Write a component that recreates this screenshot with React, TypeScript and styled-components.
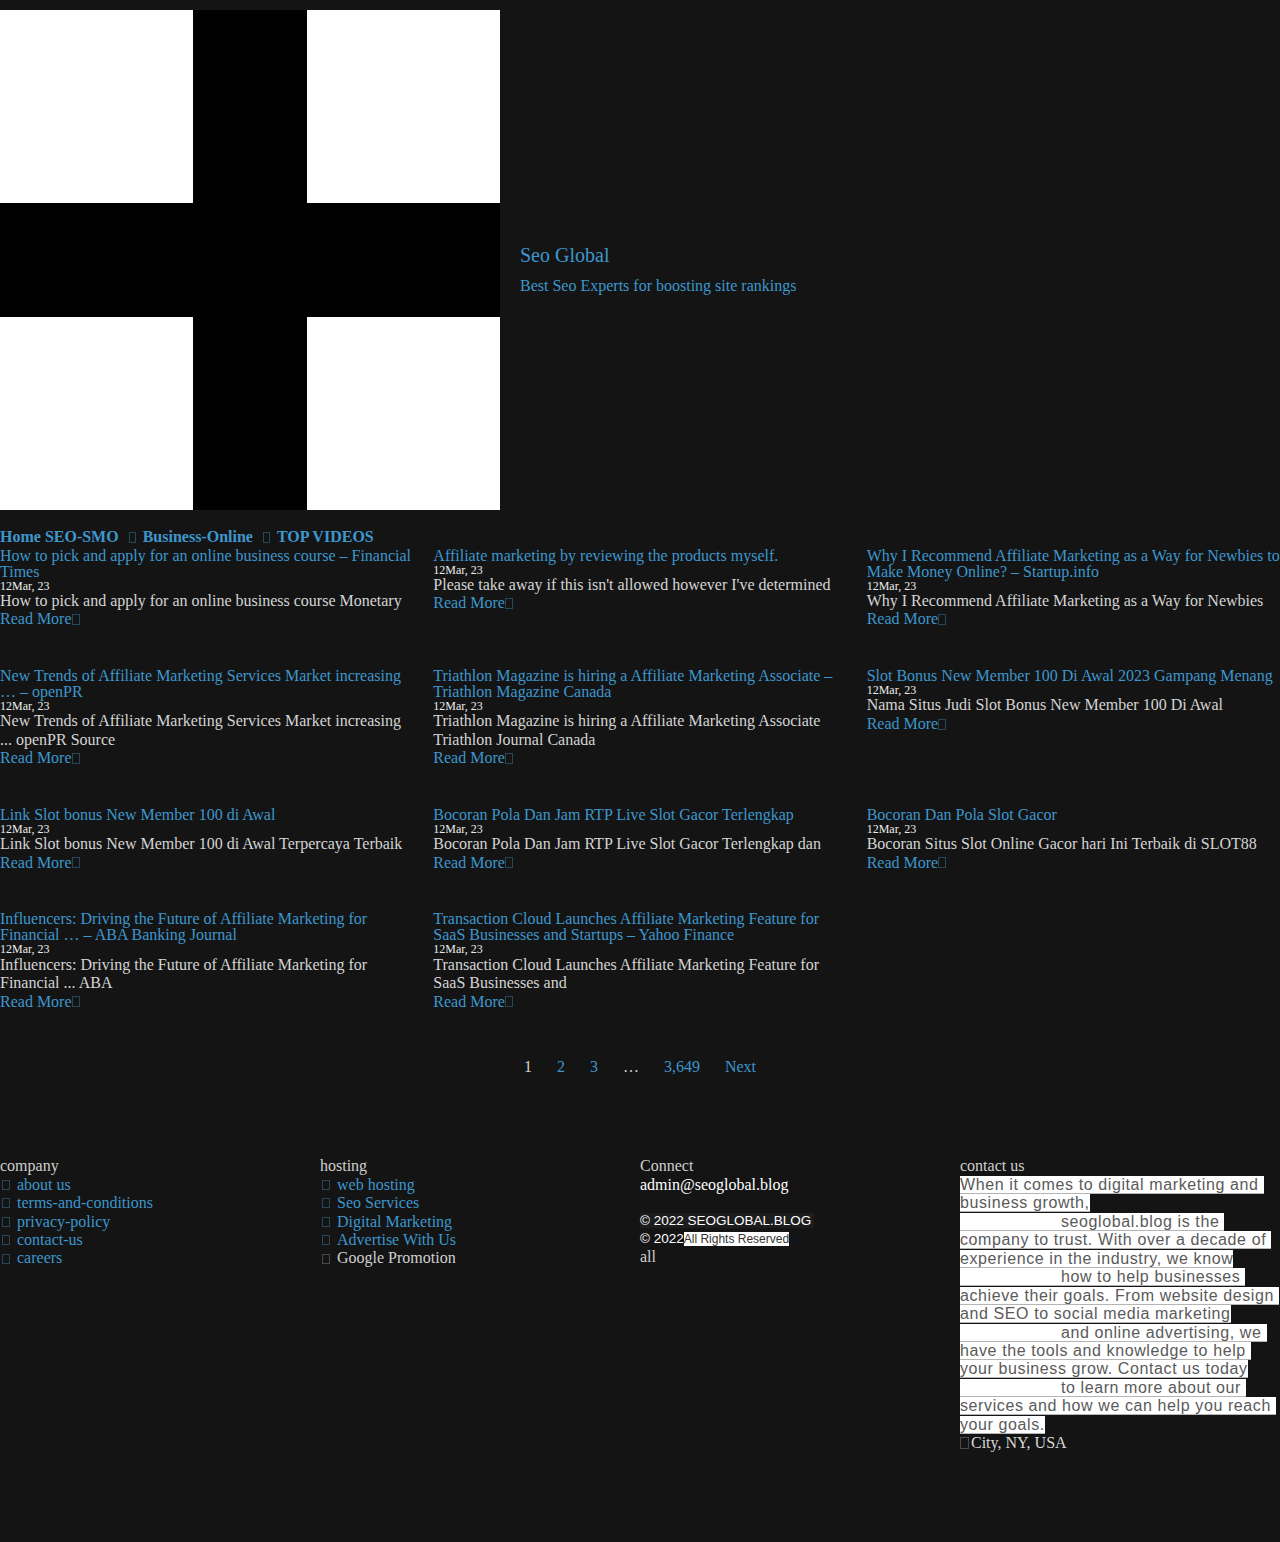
import React from 'react';
import styled, { createGlobalStyle } from 'styled-components';

const BLUE = '#3d97cd';
const DIM_BLUE = '#27465a';

const Global = createGlobalStyle`
  html, body { margin: 0; padding: 0; background: #141414; }
  body {
    font-family: "Liberation Serif", "Times New Roman", serif;
    font-size: 16px;
    line-height: 18.4px;
    color: #d2d2d2;
  }
  a { text-decoration: none; color: inherit; }
`;

const Page = styled.div`
  min-height: 1542px;
  padding-top: 10px;
  box-sizing: border-box;
`;

const Header = styled.header`
  display: flex;
  align-items: center;
`;

const Brand = styled.div`
  margin-left: 20px;
  color: ${BLUE};
`;

const SiteTitle = styled.h1`
  font-size: 20px;
  font-weight: normal;
  margin: 19px 0 10px;
  line-height: 23px;
`;

const Tagline = styled.p`
  margin: 0;
  font-size: 16px;
`;

const Tofu = styled.span<{ $w?: number; $h?: number; $c?: string }>`
  display: inline-block;
  box-sizing: border-box;
  width: ${(p) => p.$w ?? 7}px;
  height: ${(p) => p.$h ?? 11}px;
  border: 1px solid ${(p) => p.$c ?? DIM_BLUE};
  flex: none;
`;

const Nav = styled.nav`
  margin-top: 18px;
  display: flex;
  align-items: center;
  font-weight: bold;
  color: ${BLUE};
  line-height: 18px;
`;

const NavItem = styled.a`
  display: inline-flex;
  align-items: center;
  gap: 7px;
  margin-right: 10px;
`;

const Grid = styled.div`
  display: grid;
  grid-template-columns: repeat(3, 1fr);
  column-gap: 20px;
  row-gap: 37.7px;
  align-items: start;
`;

const Card = styled.article`
  display: flex;
  flex-direction: column;
`;

const CardTitle = styled.a`
  display: block;
  color: ${BLUE};
  line-height: 16px;
  padding-top: 1.5px;
`;

const CardDate = styled.span`
  font-size: 12px;
  line-height: 12px;
  padding-bottom: 0.5px;
  color: #ececec;
`;

const Excerpt = styled.p`
  margin: 0;
  color: #d4d4d4;
`;

const More = styled.a`
  display: flex;
  align-items: center;
  height: 18.4px;
  color: ${BLUE};
`;

const Pagination = styled.nav`
  margin-top: 47px;
  display: flex;
  justify-content: center;
  gap: 25px;
`;

const PageLink = styled.a<{ $current?: boolean }>`
  color: ${(p) => (p.$current ? '#d0d0d0' : BLUE)};
`;

const Footer = styled.footer`
  margin-top: 81px;
  display: grid;
  grid-template-columns: repeat(4, 320px);
`;

const FooterCol = styled.div`
  display: flex;
  flex-direction: column;
`;

const FooterHeading = styled.div`
  color: #cfcfcf;
`;

const FooterList = styled.ul`
  list-style: none;
  margin: 0;
  padding: 0;
`;

const FooterItem = styled.li<{ $plain?: boolean }>`
  display: flex;
  align-items: center;
  gap: 7px;
  padding-left: 2px;
  height: 18.4px;
  color: ${(p) => (p.$plain ? '#d0d0d0' : BLUE)};
`;

const Email = styled.div`
  color: #ffffff;
`;

const Spacer = styled.div`
  height: 18px;
`;

const Copyright = styled.div`
  font-family: "Liberation Sans", Arial, sans-serif;
  font-size: 13.5px;
  line-height: 18px;
  color: #ffffff;
`;

const CopyBox = styled.span`
  background: #1d1d1d;
  padding-right: 3px;
`;

const Rights = styled.span`
  background: #ffffff;
  color: #333333;
  font-size: 12px;
`;

const AllText = styled.div`
  color: #d0d0d0;
`;

const ContactPara = styled.p`
  margin: 0;
  font-family: "Liberation Sans", Arial, sans-serif;
  font-size: 16px;
  letter-spacing: 0.6px;
  white-space: pre-wrap;
  line-height: 18.46px;
`;

const Highlight = styled.span`
  background: #ffffff;
  color: #5a5a5a;
  border-bottom: 1px solid #b5b5b5;
`;

const City = styled.div`
  display: flex;
  align-items: center;
  gap: 2px;
  color: #d8d8d8;
`;

const Logo = () => (
  <svg width="500" height="500" viewBox="0 0 500 500" style={{ display: 'block', flex: 'none' }}>
    <rect width="500" height="500" fill="#ffffff" />
    <rect x="193" y="0" width="114" height="500" fill="#000000" />
    <rect x="0" y="193" width="500" height="114" fill="#000000" />
  </svg>
);

const posts = [
  {
    t: 'How to pick and apply for an online business course – Financial Times',
    e: 'How to pick and apply for an online business course Monetary',
  },
  {
    t: 'Affiliate marketing by reviewing the products myself.',
    e: "Please take away if this isn't allowed however I've determined",
  },
  {
    t: 'Why I Recommend Affiliate Marketing as a Way for Newbies to Make Money Online? – Startup.info',
    e: 'Why I Recommend Affiliate Marketing as a Way for Newbies',
  },
  {
    t: 'New Trends of Affiliate Marketing Services Market increasing … – openPR',
    e: 'New Trends of Affiliate Marketing Services Market increasing ... openPR Source',
  },
  {
    t: 'Triathlon Magazine is hiring a Affiliate Marketing Associate – Triathlon Magazine Canada',
    e: 'Triathlon Magazine is hiring a Affiliate Marketing Associate Triathlon Journal Canada',
  },
  {
    t: 'Slot Bonus New Member 100 Di Awal 2023 Gampang Menang',
    e: 'Nama Situs Judi Slot Bonus New Member 100 Di Awal',
  },
  {
    t: 'Link Slot bonus New Member 100 di Awal',
    e: 'Link Slot bonus New Member 100 di Awal Terpercaya Terbaik',
  },
  {
    t: 'Bocoran Pola Dan Jam RTP Live Slot Gacor Terlengkap',
    e: 'Bocoran Pola Dan Jam RTP Live Slot Gacor Terlengkap dan',
  },
  {
    t: 'Bocoran Dan Pola Slot Gacor',
    e: 'Bocoran Situs Slot Online Gacor hari Ini Terbaik di SLOT88',
  },
  {
    t: 'Influencers: Driving the Future of Affiliate Marketing for Financial … – ABA Banking Journal',
    e: 'Influencers: Driving the Future of Affiliate Marketing for Financial ... ABA',
  },
  {
    t: 'Transaction Cloud Launches Affiliate Marketing Feature for SaaS Businesses and Startups – Yahoo Finance',
    e: 'Transaction Cloud Launches Affiliate Marketing Feature for SaaS Businesses and',
  },
];

const IND = ' '.repeat(20);
const contactText =
  'When it comes to digital marketing and business growth,\n' +
  IND +
  'seoglobal.blog is the company to trust. With over a decade of experience in the industry, we know\n' +
  IND +
  'how to help businesses achieve their goals. From website design and SEO to social media marketing\n' +
  IND +
  'and online advertising, we have the tools and knowledge to help your business grow. Contact us today\n' +
  IND +
  'to learn more about our services and how we can help you reach your goals.';

export default function App() {
  return (
    <Page>
      <Global />
      <Header>
        <Logo />
        <Brand>
          <SiteTitle>Seo Global</SiteTitle>
          <Tagline>Best Seo Experts for boosting site rankings</Tagline>
        </Brand>
      </Header>

      <Nav>
        <NavItem href="#">Home SEO-SMO</NavItem>
        <NavItem href="#">
          <Tofu />
          Business-Online
        </NavItem>
        <NavItem href="#">
          <Tofu />
          TOP VIDEOS
        </NavItem>
      </Nav>

      <Grid>
        {posts.map((p) => (
          <Card key={p.t}>
            <CardTitle href="#">{p.t}</CardTitle>
            <CardDate>12Mar, 23</CardDate>
            <Excerpt>{p.e}</Excerpt>
            <More href="#">
              Read More
              <Tofu $w={8} $h={11} />
            </More>
          </Card>
        ))}
      </Grid>

      <Pagination>
        <PageLink $current>1</PageLink>
        <PageLink href="#">2</PageLink>
        <PageLink href="#">3</PageLink>
        <PageLink $current>…</PageLink>
        <PageLink href="#">3,649</PageLink>
        <PageLink href="#">Next</PageLink>
      </Pagination>

      <Footer>
        <FooterCol>
          <FooterHeading>company</FooterHeading>
          <FooterList>
            {['about us', 'terms-and-conditions', 'privacy-policy', 'contact-us', 'careers'].map((l) => (
              <FooterItem key={l}>
                <Tofu $w={8} $h={10} />
                {l}
              </FooterItem>
            ))}
          </FooterList>
        </FooterCol>
        <FooterCol>
          <FooterHeading>hosting</FooterHeading>
          <FooterList>
            {['web hosting', 'Seo Services', 'Digital Marketing', 'Advertise With Us'].map((l) => (
              <FooterItem key={l}>
                <Tofu $w={8} $h={10} />
                {l}
              </FooterItem>
            ))}
            <FooterItem $plain>
              <Tofu $w={8} $h={10} $c="#4a4a4a" />
              Google Promotion
            </FooterItem>
          </FooterList>
        </FooterCol>
        <FooterCol>
          <FooterHeading>Connect</FooterHeading>
          <Email>admin@seoglobal.blog</Email>
          <Spacer />
          <Copyright>
            <CopyBox>© 2022 SEOGLOBAL.BLOG</CopyBox>
          </Copyright>
          <Copyright>
            © 2022<Rights>All Rights Reserved</Rights>
          </Copyright>
          <AllText>all</AllText>
        </FooterCol>
        <FooterCol>
          <FooterHeading>contact us</FooterHeading>
          <ContactPara>
            <Highlight>{contactText}</Highlight>
          </ContactPara>
          <City>
            <Tofu $w={9} $h={12} $c="#4a4a4a" />
            City, NY, USA
          </City>
        </FooterCol>
      </Footer>
    </Page>
  );
}
